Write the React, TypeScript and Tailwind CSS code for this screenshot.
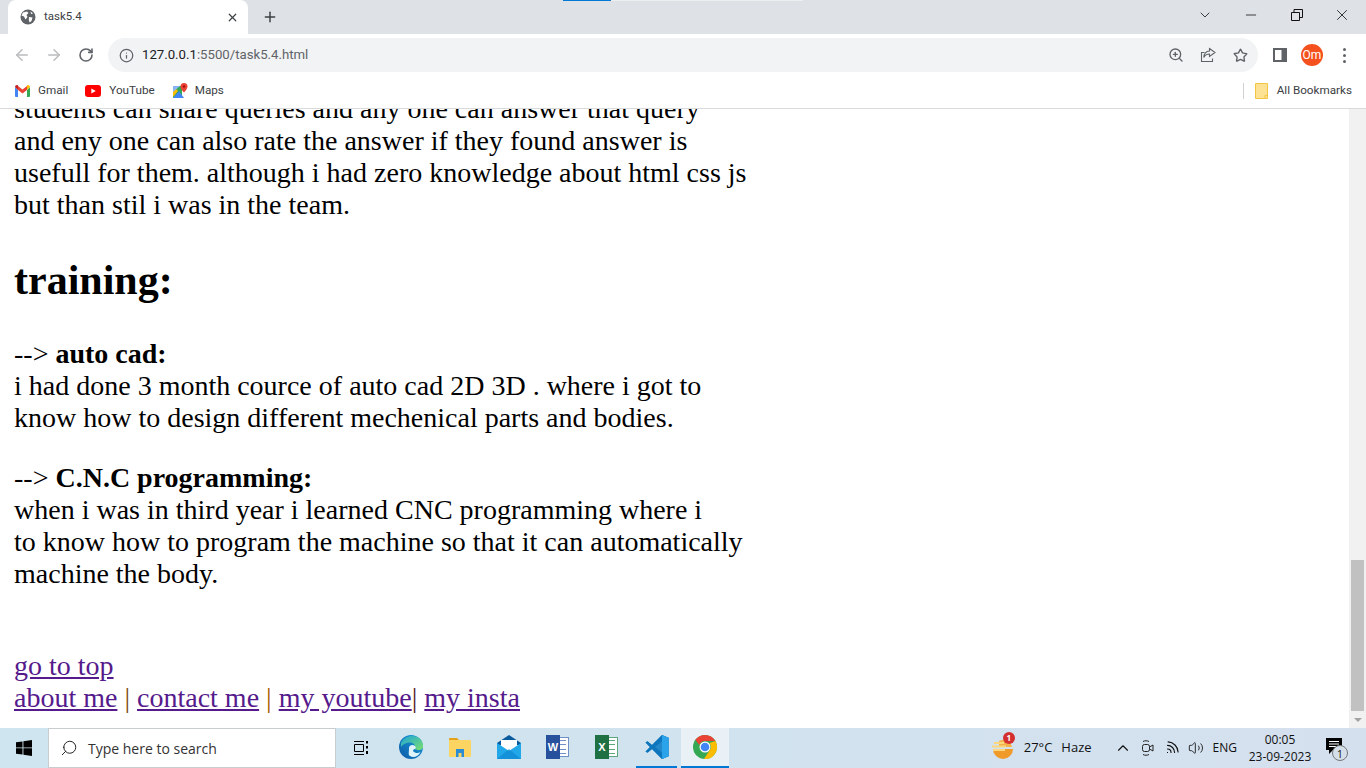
import React from "react";
import { ArrowLeft, ArrowRight, RotateCw, Info, ZoomIn, Star, X, Plus, ChevronDown, Minus, Search, ChevronUp, Volume2, Wifi } from "lucide-react";

const Globe = () => (
  <svg width="16" height="16" viewBox="0 0 16 16">
    <circle cx="8" cy="8" r="7.5" fill="#5f6368" />
    <path d="M3 3.5 L7 2.5 L8.5 4 L6.5 6 L7.5 8 L5.5 10.5 L4 7.5 L1.5 6.5Z M9 8 L12.5 8.5 L11.5 12 L9.5 13.5 L8.8 11Z M10.5 2.5 L13 4.5 L11 5Z" fill="#fff" />
  </svg>
);

const GmailIcon = () => (
  <svg width="15" height="12" viewBox="0 0 15 12">
    <path d="M0 2v9a1 1 0 0 0 1 1h2V5z" fill="#4285f4" />
    <path d="M15 2v9a1 1 0 0 1-1 1h-2V5z" fill="#34a853" />
    <path d="M12 1 7.5 4.5 3 1v4l4.5 3.5L12 5z" fill="#ea4335" />
    <path d="M0 2c0-1.6 1.9-2.5 3-1.5V5z" fill="#c5221f" />
    <path d="M15 2c0-1.6-1.9-2.5-3-1.5V5z" fill="#fbbc04" />
  </svg>
);

const YoutubeIcon = () => (
  <svg width="16" height="12" viewBox="0 0 16 12">
    <rect width="16" height="12" rx="3" fill="#f00" />
    <path d="M6.3 3.4v5.2L10.8 6z" fill="#fff" />
  </svg>
);

const MapsIcon = () => (
  <svg width="16" height="16" viewBox="0 0 16 16">
    <path d="M1 3h9v12H1z" fill="#34a853" />
    <path d="M1 15 7 8l5 7z" fill="#4285f4" />
    <path d="M1 3l5 5-5 6z" fill="#fbbc04" />
    <path d="M1 3h7L1 9z" fill="#8ab4f8" />
    <path d="M12 0a3.5 3.5 0 0 0-3.5 3.5C8.500 6 12 9.500 12 9.500s3.500-3.500 3.500-6A3.500 3.500 0 0 0 12 0z" fill="#ea4335" />
    <circle cx="12" cy="3.500" r="1.200" fill="#a50e0e" />
  </svg>
);

const FolderIcon = () => (
  <svg width="13" height="16" viewBox="0 0 13 16">
    <path d="M.5.500h12v15H.5z" fill="#fde293" stroke="#f4c542" />
    <path d="M10 15.500v-3h2.500" fill="none" stroke="#f4c542" />
  </svg>
);

const SidePanel = () => (
  <svg width="14" height="14" viewBox="0 0 14 14">
    <path d="M0 0h14v14H0z" fill="#5f6368" />
    <path d="M2 2h6.500v10H2z" fill="#fff" />
  </svg>
);

const ShareIcon = () => (
  <svg width="16" height="16" viewBox="0 0 16 16" fill="none" stroke="#5f6368" strokeWidth="1.100">
    <path d="M4.500 5.500H1.500v9h11v-3" />
    <path d="M9.500 1.500 15 5.500 9.500 9.500V7C7 7 5 8 3.800 10.500 4 7 6 4.200 9.500 4z" />
  </svg>
);

const WinLogo = () => (
  <svg width="16" height="16" viewBox="0 0 16 16" fill="#000">
    <path d="M0 2.300 6.500 1.400v6H0zM7.400 1.300 16 0v7.400H7.400zM0 8.300h6.500v6.300L0 13.700zM7.400 8.300H16V16l-8.600-1.200z" />
  </svg>
);

const TaskView = () => (
  <svg width="16" height="16" viewBox="0 0 16 16" fill="none" stroke="#000">
    <path d="M1 1.500h10M1 14.500h10M1.500 4.500h9v7h-9z" />
    <path d="M14 1v2.500M14 6v2.500M14 11v3" strokeWidth="2" />
  </svg>
);

const EdgeIcon = () => (
  <svg width="24" height="24" viewBox="0 0 24 24">
    <defs>
      <linearGradient id="edgeA" x1="0" y1="1" x2="1" y2="0">
        <stop offset="0" stopColor="#0c59a4" />
        <stop offset="1" stopColor="#1ba0e0" />
      </linearGradient>
      <linearGradient id="edgeB" x1="0" y1="0" x2="1" y2="1">
        <stop offset="0" stopColor="#1fa5d8" />
        <stop offset="1" stopColor="#7be06e" />
      </linearGradient>
    </defs>
    <circle cx="12" cy="12" r="12" fill="url(#edgeA)" />
    <path d="M2 8C5 1 14-1 20 3c3 2 4.500 6 4 9.500-1 3-6 3.500-8 1.500 1-3-1-6.500-5-6.500C7 7.500 4 9 2 12z" fill="url(#edgeB)" />
    <path d="M10 13c0-3 4-4 6-2 1 1 1 2 0 3-2 .5-3 2 0 3.500 2 1 4 .5 5.500-.5C19 22 14 23 11 21c-2-1.500-1-2-1-8z" fill="#dff3fb" />
  </svg>
);

const ExplorerIcon = () => (
  <svg width="22" height="20" viewBox="0 0 22 20">
    <path d="M0 2a1 1 0 0 1 1-1h7l2 2H0z" fill="#e3a21a" />
    <path d="M0 3h21a1 1 0 0 1 1 1v15a1 1 0 0 1-1 1H1a1 1 0 0 1-1-1z" fill="#fcd462" />
    <path d="M7 12h8v8h-2.500v-4h-3v4H7z" fill="#2a8dd4" />
  </svg>
);

const MailIcon = () => (
  <svg width="24" height="24" viewBox="0 0 24 24">
    <path d="M0 8 12 0l12 8v2H0z" fill="#0a5a9e" />
    <path d="M4 5h16v7l-8 5-8-5z" fill="#fff" />
    <path d="M0 8l12 8 12-8v16H0z" fill="#22a7e8" />
    <path d="M0 24 12 14l12 10z" fill="#1289d6" opacity=".75" />
  </svg>
);

const OfficeIcon = ({ letter, dark, light }: { letter: string; dark: string; light: string }) => (
  <div className="relative flex h-[24px] w-[23px] items-center">
    <div className="ml-[9px] flex h-[20px] w-[14px] flex-col justify-around border bg-white px-[2px]" style={{ borderColor: light }}>
      <div className="h-[1px]" style={{ background: light }} />
      <div className="h-[1px]" style={{ background: light }} />
      <div className="h-[1px]" style={{ background: light }} />
      <div className="h-[1px]" style={{ background: light }} />
    </div>
    <div
      className="absolute top-0 left-0 flex h-[24px] w-[14px] items-center justify-center text-[11px] font-bold text-white [font-family:'Liberation_Sans',sans-serif]"
      style={{ background: dark }}
    >
      {letter}
    </div>
  </div>
);

const VSCodeIcon = () => (
  <svg width="24" height="24" viewBox="0 0 24 24">
    <path d="M17 0 7 10 2.500 6.300.5 7.500 5 12 .5 16.500l2 1.200L7 14l10 10 6.500-2.800V2.800z" fill="#2489ca" />
    <path d="M17 0l6.500 2.800v18.400L17 24V6.500L10 12l7 5.500V24L7 14l-4.500 3.700-2-1.200L5 12 .5 7.500l2-1.200L7 10z" fill="#0e76bd" />
    <path d="M17 0l6.500 2.800v18.400L17 24z" fill="#2aa3ea" />
  </svg>
);

const ChromeIcon = () => (
  <svg width="24" height="24" viewBox="0 0 24 24">
    <circle cx="12" cy="12" r="12" fill="#34a853" />
    <path d="M12 0a12 12 0 0 1 10.400 6H12a6 6 0 0 0-5.700 4.100L2.400 4.800A12 12 0 0 1 12 0z" fill="#ea4335" />
    <path d="M22.400 6A12 12 0 0 1 11 24l5.500-8.500A6 6 0 0 0 16.500 8z" fill="#fbbc04" />
    <circle cx="12" cy="12" r="5.500" fill="#fff" />
    <circle cx="12" cy="12" r="4.300" fill="#4285f4" />
  </svg>
);

const WeatherIcon = () => (
  <svg width="24" height="24" viewBox="0 0 24 24">
    <path d="M2 13h20a10 10 0 0 1-20 0z" fill="#f09a2a" />
    <path d="M8 5a9 9 0 0 1 13 6H8z" fill="#f4b24a" />
    <path d="M3 6h10v2H3zM1 9.500h14v2H1zM2 13h12v2H2z" fill="#fcd77e" />
  </svg>
);

const MeetIcon = () => (
  <svg width="18" height="18" viewBox="0 0 18 18" fill="none" stroke="#222">
    <rect x="3.500" y="5.500" width="7" height="7" rx="2" />
    <path d="M10.500 8 14 6v6l-3.500-2" />
    <path d="M4 2.500c2-1 4-1 6 0M4 15.500c2 1 4 1 6 0" />
  </svg>
);

const NotifyIcon = () => (
  <div className="relative h-[24px] w-[26px]">
    <svg width="18" height="17" viewBox="0 0 18 17" className="absolute top-[2px] left-0">
      <path d="M1 0h16v12H8l-4 4v-4H1z" fill="#000" />
      <path d="M4 3.500h10M4 6h10M4 8.500h7" stroke="#fff" />
    </svg>
    <div className="absolute top-[9px] left-[7px] flex h-[16px] w-[16px] items-center justify-center rounded-full border border-[#777] bg-[#d4dfea] text-[11px] leading-none text-[#222]">
      1
    </div>
  </div>
);

function TaskbarApp({ children, className }: { children: React.ReactNode; className?: string }) {
  return <div className={`flex h-full items-center justify-center border-b-2 ${className ?? "w-[49px] border-transparent"}`}>{children}</div>;
}

function ChromeFrame() {
  return (
    <div className="shrink-0 [font-family:'Open_Sans','Noto_Sans',sans-serif]">
      {/* tab strip */}
      <div className="relative flex h-[34px] items-end bg-[#dee1e6]">
        <div className="absolute top-0 left-[563px] h-[1px] w-[48px] bg-[#0078d4]" />
        <div className="absolute top-0 left-[611px] h-[1px] w-[192px] bg-[#eceef0]" />
        <div className="ml-[8px] flex h-[34px] w-[240px] items-center rounded-t-[8px] bg-white pr-[9px] pl-[12px]">
          <Globe />
          <span className="ml-[8px] flex-1 text-[11.500px] text-[#3c4043] [font-family:'Roboto',sans-serif]">task5.4</span>
          <X size={13} strokeWidth={2.200} className="text-[#3c4043]" />
        </div>
        <div className="ml-[14px] flex h-[34px] items-center">
          <Plus size={16} strokeWidth={2.200} className="text-[#3c4043]" />
        </div>
        <div className="ml-auto flex h-[34px] items-start text-[#111]">
          <div className="mt-[7px] mr-[30px]"><ChevronDown size={16} strokeWidth={1.200} /></div>
          <div className="mt-[7px] mr-[32px]"><Minus size={16} strokeWidth={1.200} /></div>
          <svg width="12" height="12" viewBox="0 0 12 12" fill="none" stroke="#111" className="mt-[9px] mr-[30px]">
            <path d="M.5 3.500h8v8h-8zM3 3.500v-3h8.500v8h-3" />
          </svg>
          <div className="mt-[6px] mr-[15px]"><X size={18} strokeWidth={1.100} /></div>
        </div>
      </div>
      {/* toolbar */}
      <div className="flex h-[42px] items-center bg-white">
        <ArrowLeft size={18} strokeWidth={2} className="ml-[13px] text-[#babcbe]" />
        <ArrowRight size={18} strokeWidth={2} className="ml-[14px] text-[#babcbe]" />
        <RotateCw size={16} strokeWidth={2.400} className="ml-[15px] text-[#5f6368]" />
        <div className="ml-[14px] flex h-[34px] w-[1150px] items-center rounded-full bg-[#f1f3f4] pr-[10px] pl-[11px]">
          <Info size={15} strokeWidth={2} className="text-[#5f6368]" />
          <span className="ml-[8px] flex-1 text-[13.200px] text-[#5f6368] [font-family:'Roboto',sans-serif]">
            <span className="text-[#202124]">127.0.0.1</span>:5500/task5.4.html
          </span>
          <ZoomIn size={16} strokeWidth={2} className="mr-[2px] text-[#5f6368]" />
          <div className="ml-[14px]"><ShareIcon /></div>
          <Star size={15} strokeWidth={2.200} className="ml-[17px] text-[#5f6368]" />
        </div>
        <div className="ml-[15px]"><SidePanel /></div>
        <div className="ml-[14px] flex h-[22px] w-[22px] items-center justify-center rounded-full bg-[#f4511e] text-[12px] text-white [font-family:'Roboto',sans-serif]">Om</div>
        <div className="ml-[20px] flex flex-col gap-[3px]">
          <div className="h-[3px] w-[3px] rounded-full bg-[#5f6368]" />
          <div className="h-[3px] w-[3px] rounded-full bg-[#5f6368]" />
          <div className="h-[3px] w-[3px] rounded-full bg-[#5f6368]" />
        </div>
      </div>
      {/* bookmarks */}
      <div className="flex h-[33px] items-center border-b border-[#d9dadc] bg-white pb-[3px] text-[11.700px] text-[#3c4043] [font-family:'Roboto',sans-serif]">
        <div className="ml-[15px]"><GmailIcon /></div>
        <span className="ml-[8px]">Gmail</span>
        <div className="ml-[17px]"><YoutubeIcon /></div>
        <span className="ml-[8px]">YouTube</span>
        <div className="ml-[17px]"><MapsIcon /></div>
        <span className="ml-[7px]">Maps</span>
        <div className="ml-auto h-[16px] w-[1px] bg-[#cfd1d3]" />
        <div className="ml-[11px]"><FolderIcon /></div>
        <span className="mr-[14px] ml-[9px]">All Bookmarks</span>
      </div>
    </div>
  );
}

function Scrollbar() {
  return (
    <div className="flex w-[17px] shrink-0 flex-col bg-[#f1f1f1] px-[2px]">
      <div className="flex-1" />
      <div className="h-[151px] bg-[#c1c1c1]" />
      <div className="flex h-[17px] items-center justify-center">
        <div className="h-0 w-0 border-x-[4px] border-t-[4px] border-x-transparent border-t-[#a3a3a3]" />
      </div>
    </div>
  );
}

function Page() {
  const link = "text-[#551a8b] underline";
  return (
    <div className="min-w-0 flex-1 overflow-hidden bg-white pl-[14px] text-[28px] leading-[32px] text-black [font-family:'Liberation_Serif',serif]">
      <p className="mt-[-16px] whitespace-nowrap">
        students can share queries and any one can answer that query<br />
        and eny one can also rate the answer if they found answer is<br />
        usefull for them. although i had zero knowledge about html css js<br />
        but than stil i was in the team.
      </p>
      <h2 className="mt-[35px] text-[42px] leading-[48px] font-bold">training:</h2>
      <p className="mt-[34px] whitespace-nowrap">
        --&gt; <b>auto cad:</b><br />
        i had done 3 month cource of auto cad 2D 3D . where i got to<br />
        know how to design different mechenical parts and bodies.
      </p>
      <p className="mt-[28px] whitespace-nowrap">
        --&gt; <b>C.N.C programming:</b><br />
        when i was in third year i learned CNC programming where i<br />
        to know how to program the machine so that it can automatically<br />
        machine the body.
      </p>
      <p className="mt-[60px] whitespace-nowrap">
        <a className={link}>go to top</a><br />
        <a className={link}>about me</a> <span className="text-[#7a4a10]">|</span> <a className={link}>contact me</a>{" "}
        <span className="text-[#a85a00]">|</span> <a className={link}>my youtube</a><span className="text-[#551a2b]">|</span>{" "}
        <a className={link}>my insta</a>
      </p>
    </div>
  );
}

function Taskbar() {
  return (
    <div className="flex h-[40px] shrink-0 items-center bg-gradient-to-r from-[#cfe5ef] via-[#d0e3ee] to-[#d5e0ee] text-[#111] [font-family:'Open_Sans','Noto_Sans',sans-serif]">
      <div className="flex w-[48px] justify-center"><WinLogo /></div>
      <div className="flex h-[40px] w-[288px] items-center border border-[#c8cdd0] bg-white pl-[11px] text-[14px] text-[#333]">
        <Search size={18} strokeWidth={1.300} className="-scale-x-100 text-[#222]" />
        <span className="ml-[10px]">Type here to search</span>
      </div>
      <div className="flex w-[50px] justify-center"><TaskView /></div>
      <div className="flex h-full">
        <TaskbarApp><EdgeIcon /></TaskbarApp>
        <TaskbarApp><ExplorerIcon /></TaskbarApp>
        <TaskbarApp><MailIcon /></TaskbarApp>
        <TaskbarApp><OfficeIcon letter="W" dark="#27519d" light="#6f8fc6" /></TaskbarApp>
        <TaskbarApp><OfficeIcon letter="X" dark="#1f7144" light="#5ea77c" /></TaskbarApp>
        <TaskbarApp className="mr-[4px] ml-[5px] w-[41px] border-[#0078d4]"><VSCodeIcon /></TaskbarApp>
        <TaskbarApp className="w-[48px] border-[#0078d4] bg-[#e9f1f6]"><ChromeIcon /></TaskbarApp>
      </div>
      <div className="ml-auto flex h-full items-center text-[13px]">
        <div className="relative">
          <WeatherIcon />
          <div className="absolute top-[-4px] left-[12px] flex h-[12px] w-[12px] items-center justify-center rounded-full bg-[#d32f2f] text-[8px] font-bold text-white">1</div>
        </div>
        <span className="ml-[9px]">27°C</span>
        <span className="ml-[9px]">Haze</span>
        <ChevronUp size={18} strokeWidth={1.500} className="ml-[22px]" />
        <div className="ml-[7px]"><MeetIcon /></div>
        <Wifi size={17} strokeWidth={1.600} className="ml-[6px] rotate-45" />
        <Volume2 size={16} strokeWidth={1.300} className="ml-[8px]" />
        <span className="ml-[9px] text-[12px]">ENG</span>
        <div className="ml-[14px] flex w-[58px] flex-col items-center text-[12px] leading-[17px] whitespace-nowrap">
          <span>00:05</span>
          <span>23-09-2023</span>
        </div>
        <div className="mr-[15px] ml-[16px]"><NotifyIcon /></div>
      </div>
    </div>
  );
}

export default function App() {
  return (
    <div className="flex h-[768px] w-[1366px] flex-col overflow-hidden bg-white">
      <ChromeFrame />
      <div className="flex min-h-0 flex-1">
        <Page />
        <Scrollbar />
      </div>
      <Taskbar />
    </div>
  );
}
